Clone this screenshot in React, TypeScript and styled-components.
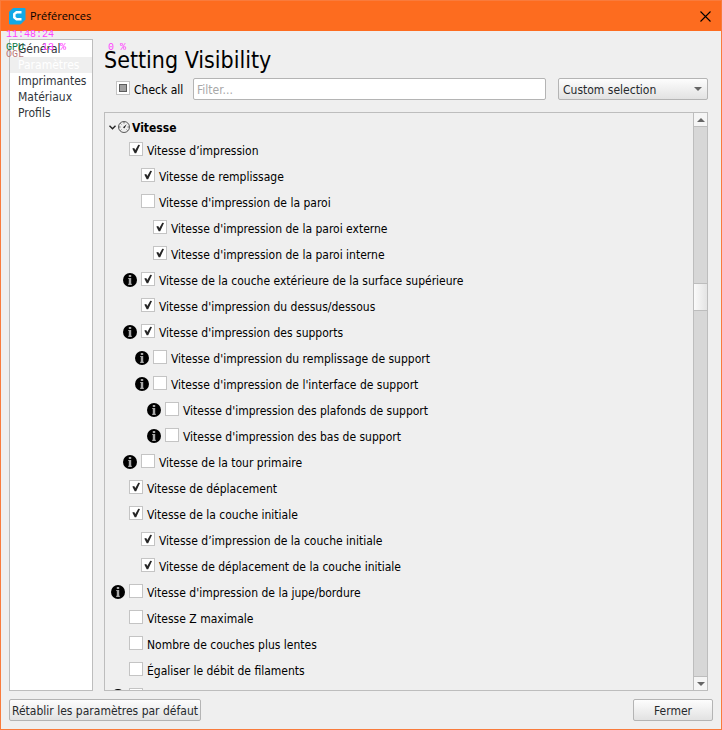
import React, { useEffect, useRef, useState } from "react";
import styled, { createGlobalStyle } from "styled-components";

const GlobalStyle = createGlobalStyle`
  * { box-sizing: border-box; }
  html, body { margin: 0; height: 100%; }
  body, button, input, select {
    font-family: "DejaVu Sans Condensed", "DejaVu Sans", sans-serif;
    font-size: 12px;
    line-height: 16px;
  }
  button { cursor: pointer; }
`;

const Window = styled.div`
  position: relative;
  display: flex;
  flex-direction: column;
  height: 100vh;
  min-height: 320px;
  border: 1px solid #f97b3c;
  background: #efefef;
  color: #000;
`;

const TitleBar = styled.header`
  display: flex;
  align-items: center;
  flex: none;
  height: 30px;
  padding: 0 8px;
  gap: 4px;
  background: #fd6c1f;
`;

const WindowTitle = styled.span`
  flex: 1;
  font-family: "Open Sans", sans-serif;
  font-size: 11px;
`;

const CloseButton = styled.button`
  display: flex;
  padding: 2px;
  border: 0;
  background: none;
`;

const Body = styled.div`
  display: flex;
  flex-direction: column;
  flex: 1;
  min-height: 0;
  padding: 8px;
  gap: 8px;
`;

const Columns = styled.div`
  display: flex;
  flex: 1;
  min-height: 0;
  gap: 11px;
  padding-right: 5px;
`;

const Sidebar = styled.nav`
  display: flex;
  flex-direction: column;
  flex: none;
  width: 84px;
  padding-top: 1px;
  border: 1px solid #bdbdbd;
  background: #fff;
`;

const SidebarItem = styled.button<{ $selected: boolean }>`
  height: 16px;
  padding: 0 0 0 8px;
  border: 0;
  text-align: left;
  white-space: nowrap;
  background: ${(p) => (p.$selected ? "#efefef" : "transparent")};
  color: ${(p) => (p.$selected ? "#fff" : "#31363b")};
`;

const Main = styled.main`
  display: flex;
  flex-direction: column;
  flex: 1;
  min-width: 0;
`;

const Heading = styled.h1`
  margin: 0;
  height: 39px;
  font-size: 23px;
  line-height: 42px;
  font-weight: 400;
`;

const FilterRow = styled.div`
  display: flex;
  align-items: center;
  gap: 12px;
  margin-bottom: 12px;
  padding-left: 12px;
`;

const CheckAllLabel = styled.label`
  display: flex;
  align-items: center;
  flex: none;
  width: 65px;
  gap: 4px;
  white-space: nowrap;
`;

const FilterInput = styled.input`
  flex: 1;
  min-width: 0;
  height: 22px;
  padding: 2px 3px 0;
  border: 1px solid #b4b4b4;
  border-radius: 2px;
  background: #fff;
  &::placeholder { color: #a8a8a8; opacity: 1; }
`;

const SelectFrame = styled.div`
  display: grid;
  align-items: center;
  flex: none;
  width: 150px;
  & > * { grid-area: 1 / 1; }
  & > svg { justify-self: end; margin-right: 6px; pointer-events: none; }
`;

const Select = styled.select`
  appearance: none;
  width: 100%;
  height: 22px;
  padding: 2px 20px 0 4px;
  border: 1px solid #b4b4b4;
  border-radius: 2px;
  background: linear-gradient(#fdfdfd, #e2e2e2);
  color: #26292c;
`;

const ListFrame = styled.section`
  display: flex;
  flex: 1;
  min-height: 0;
  border: 1px solid #bdbdbd;
`;

const List = styled.div`
  flex: 1;
  min-width: 0;
  overflow: hidden;
  padding: 4px 0 0 4px;
`;

const GroupHeader = styled.button`
  display: flex;
  align-items: center;
  height: 20px;
  padding: 0;
  gap: 2px;
  border: 0;
  background: none;
  font-weight: 700;
  color: #000;
`;

const LabelText = styled.span`
  display: block;
  padding-top: 2px;
`;

const SettingRow = styled.div<{ $level: number }>`
  display: flex;
  align-items: center;
  height: 26px;
  padding-left: ${(p) => 2 + p.$level * 12}px;
  gap: 4px;
  white-space: nowrap;
`;

const InfoSlot = styled.span`
  display: flex;
  flex: none;
  width: 14px;
`;

const BoxFrame = styled.span`
  display: grid;
  place-items: center;
  flex: none;
  margin-bottom: 2px;
  & > * { grid-area: 1 / 1; }
  & > svg { pointer-events: none; }
`;

const Box = styled.input`
  appearance: none;
  width: 14px;
  height: 14px;
  margin: 0;
  border: 1px solid #c4c4c4;
  background: #fff;
`;

const Scrollbar = styled.div`
  display: flex;
  flex-direction: column;
  flex: none;
  width: 14px;
  border-left: 1px solid #bdbdbd;
  background: #d7d7d7;
`;

const ScrollButton = styled.button<{ $edge: "top" | "bottom" }>`
  display: flex;
  align-items: center;
  justify-content: center;
  height: 14px;
  padding: 0;
  border: 0 solid #bdbdbd;
  border-bottom-width: ${(p) => (p.$edge === "top" ? 1 : 0)}px;
  border-top-width: ${(p) => (p.$edge === "bottom" ? 1 : 0)}px;
  background: #f5f5f5;
`;

const Track = styled.div<{ $share: number }>`
  flex: ${(p) => p.$share} 1 0;
`;

const Thumb = styled.div`
  flex: none;
  height: 28px;
  border: 1px solid #bdbdbd;
  border-width: 1px 0;
  background: linear-gradient(90deg, #fafafa, #e4e4e4);
`;

const Footer = styled.footer`
  display: flex;
  justify-content: space-between;
  flex: none;
`;

const PushButton = styled.button`
  height: 22px;
  min-width: 80px;
  padding: 2px 2px 0;
  border: 1px solid #b4b4b4;
  border-radius: 2px;
  background: linear-gradient(#fdfdfd, #e2e2e2);
  color: #26292c;
`;

const Monitor = styled.div`
  position: absolute;
  top: 30px;
  left: 5px;
  pointer-events: none;
  font: 10px/7px "Liberation Mono", monospace;
  color: #ff40ff;
`;

const MonitorLine = styled.div`
  height: 6px;
  white-space: pre;
`;

const MonitorGrid = styled.div`
  display: grid;
  grid-template-columns: 36px 66px auto;
  margin-top: 7px;
  white-space: pre;
`;

const MonitorTag = styled.span<{ $color: string }>`
  height: 6px;
  color: ${(p) => p.$color};
`;

const Logo = () => (
  <svg width="17" height="17" viewBox="0 0 17 17" aria-hidden="true">
    <path d="M4 0.5H16V11.500L11.500 16H0.500V4Z" fill="#12a9e6" stroke="#12a9e6" strokeLinejoin="round" />
    <path d="M12.500 4.300H7.500L5.300 6V9.500L7.500 11.200H12.500" fill="none" stroke="#fff" strokeWidth="2.500" />
  </svg>
);

const CloseIcon = () => (
  <svg width="11" height="11" viewBox="0 0 11 11" aria-hidden="true">
    <path d="M0.5 0.5L10.500 10.500M10.500 0.500L0.500 10.500" stroke="#000" strokeWidth="1.100" />
  </svg>
);

const Arrow = ({ up = false }: { up?: boolean }) => (
  <svg width="8" height="4" viewBox="0 0 8 4" aria-hidden="true">
    <path d={up ? "M0 4L4 0L8 4Z" : "M0 0H8L4 4Z"} fill="#666" />
  </svg>
);

const Chevron = () => (
  <svg width="7" height="5" viewBox="0 0 7 5" aria-hidden="true">
    <path d="M0.500 0.800L3.500 3.700L6.500 0.800" fill="none" stroke="#222" strokeWidth="1.400" />
  </svg>
);

const Gauge = () => (
  <svg width="12" height="12" viewBox="0 0 12 12" aria-hidden="true">
    <circle cx="6" cy="6" r="5.500" fill="none" stroke="#333" strokeWidth="0.800" />
    <path d="M6 1V2.500M2.400 2.400L3.400 3.400M1 6H2.500M9.500 6H11M2.600 9.400L3.400 8.600M9.400 9.400L8.600 8.600" stroke="#444" strokeWidth="0.800" />
    <path d="M5.300 6L8.700 3.200L6.700 7A0.900 0.900 0 0 1 5.300 6Z" fill="#222" />
  </svg>
);

const Info = () => (
  <svg width="14" height="14" viewBox="0 0 14 14" role="img" aria-label="Information">
    <circle cx="7" cy="7" r="7" fill="#000" />
    <path d="M5.800 2H8.200V4H5.800ZM5.200 5H8.200V10.800H8.800V12H5.200V10.800H5.800V6H5.200Z" fill="#a8a8a8" />
  </svg>
);

const Tick = () => (
  <svg width="14" height="14" viewBox="0 0 14 14" aria-hidden="true">
    <path d="M3.300 6.500L5.200 6.100L6.300 8.100L9.300 2.800L11 3L7.200 11.200H5.700Z" fill="#262626" />
  </svg>
);

const PartialMark = () => (
  <svg width="8" height="8" viewBox="0 0 8 8" aria-hidden="true">
    <rect x="0.500" y="0.500" width="7" height="7" fill="#a0a0a0" stroke="#5c5c5c" />
  </svg>
);

type Setting = { label: string; level: number; checked?: boolean; info?: boolean };

const SETTINGS: Setting[] = [
  { label: "Vitesse d’impression", level: 0, checked: true },
  { label: "Vitesse de remplissage", level: 1, checked: true },
  { label: "Vitesse d'impression de la paroi", level: 1 },
  { label: "Vitesse d'impression de la paroi externe", level: 2, checked: true },
  { label: "Vitesse d'impression de la paroi interne", level: 2, checked: true },
  { label: "Vitesse de la couche extérieure de la surface supérieure", level: 1, checked: true, info: true },
  { label: "Vitesse d'impression du dessus/dessous", level: 1, checked: true },
  { label: "Vitesse d'impression des supports", level: 1, checked: true, info: true },
  { label: "Vitesse d'impression du remplissage de support", level: 2, info: true },
  { label: "Vitesse d'impression de l'interface de support", level: 2, info: true },
  { label: "Vitesse d'impression des plafonds de support", level: 3, info: true },
  { label: "Vitesse d'impression des bas de support", level: 3, info: true },
  { label: "Vitesse de la tour primaire", level: 1, info: true },
  { label: "Vitesse de déplacement", level: 0, checked: true },
  { label: "Vitesse de la couche initiale", level: 0, checked: true },
  { label: "Vitesse d’impression de la couche initiale", level: 1, checked: true },
  { label: "Vitesse de déplacement de la couche initiale", level: 1, checked: true },
  { label: "Vitesse d'impression de la jupe/bordure", level: 0, info: true },
  { label: "Vitesse Z maximale", level: 0 },
  { label: "Nombre de couches plus lentes", level: 0 },
  { label: "Égaliser le débit de filaments", level: 0 },
  { label: "", level: 0, info: true },
];

const PAGES = ["Général", "Paramètres", "Imprimantes", "Matériaux", "Profils"];

function SettingItem({ setting, index }: { setting: Setting; index: number }) {
  const [checked, setChecked] = useState(Boolean(setting.checked));
  const id = `setting-${index}`;
  return (
    <SettingRow $level={setting.level}>
      <InfoSlot>{setting.info && <Info />}</InfoSlot>
      <BoxFrame>
        <Box id={id} type="checkbox" checked={checked} onChange={() => setChecked(!checked)} />
        {checked && <Tick />}
      </BoxFrame>
      <LabelText as="label" htmlFor={id}>{setting.label}</LabelText>
    </SettingRow>
  );
}

export default function App() {
  const [page, setPage] = useState("Paramètres");
  const [open, setOpen] = useState(true);
  const checkAll = useRef<HTMLInputElement>(null);

  useEffect(() => {
    if (checkAll.current) checkAll.current.indeterminate = true;
  }, []);

  return (
    <>
      <GlobalStyle />
      <Window>
        <TitleBar>
          <Logo />
          <WindowTitle>Préférences</WindowTitle>
          <CloseButton aria-label="Fermer la fenêtre">
            <CloseIcon />
          </CloseButton>
        </TitleBar>
        <Body>
          <Columns>
            <Sidebar>
              {PAGES.map((name) => (
                <SidebarItem key={name} $selected={name === page} onClick={() => setPage(name)}>
                  {name}
                </SidebarItem>
              ))}
            </Sidebar>
            <Main>
              <Heading>Setting Visibility</Heading>
              <FilterRow>
                <CheckAllLabel>
                  <BoxFrame>
                    <Box ref={checkAll} type="checkbox" />
                    <PartialMark />
                  </BoxFrame>
                  <LabelText>Check all</LabelText>
                </CheckAllLabel>
                <FilterInput type="text" placeholder="Filter..." aria-label="Filter" />
                <SelectFrame>
                  <Select aria-label="Visibility preset">
                    <option>Custom selection</option>
                  </Select>
                  <Arrow />
                </SelectFrame>
              </FilterRow>
              <ListFrame>
                <List>
                  <GroupHeader aria-expanded={open} onClick={() => setOpen(!open)}>
                    <Chevron />
                    <Gauge />
                    <LabelText>Vitesse</LabelText>
                  </GroupHeader>
                  {open && SETTINGS.map((s, i) => <SettingItem key={i} setting={s} index={i} />)}
                </List>
                <Scrollbar>
                  <ScrollButton $edge="top" aria-label="Scroll up">
                    <Arrow up />
                  </ScrollButton>
                  <Track $share={3} />
                  <Thumb />
                  <Track $share={7} />
                  <ScrollButton $edge="bottom" aria-label="Scroll down">
                    <Arrow />
                  </ScrollButton>
                </Scrollbar>
              </ListFrame>
            </Main>
          </Columns>
          <Footer>
            <PushButton>Rétablir les paramètres par défaut</PushButton>
            <PushButton>Fermer</PushButton>
          </Footer>
        </Body>
        <Monitor>
          <MonitorLine>11:48:24</MonitorLine>
          <MonitorGrid>
            <MonitorTag $color="#0a7a45">GPU</MonitorTag>
            <span>13 %</span>
            <span>0 %</span>
            <MonitorTag $color="#b87878">OGL</MonitorTag>
          </MonitorGrid>
        </Monitor>
      </Window>
    </>
  );
}
